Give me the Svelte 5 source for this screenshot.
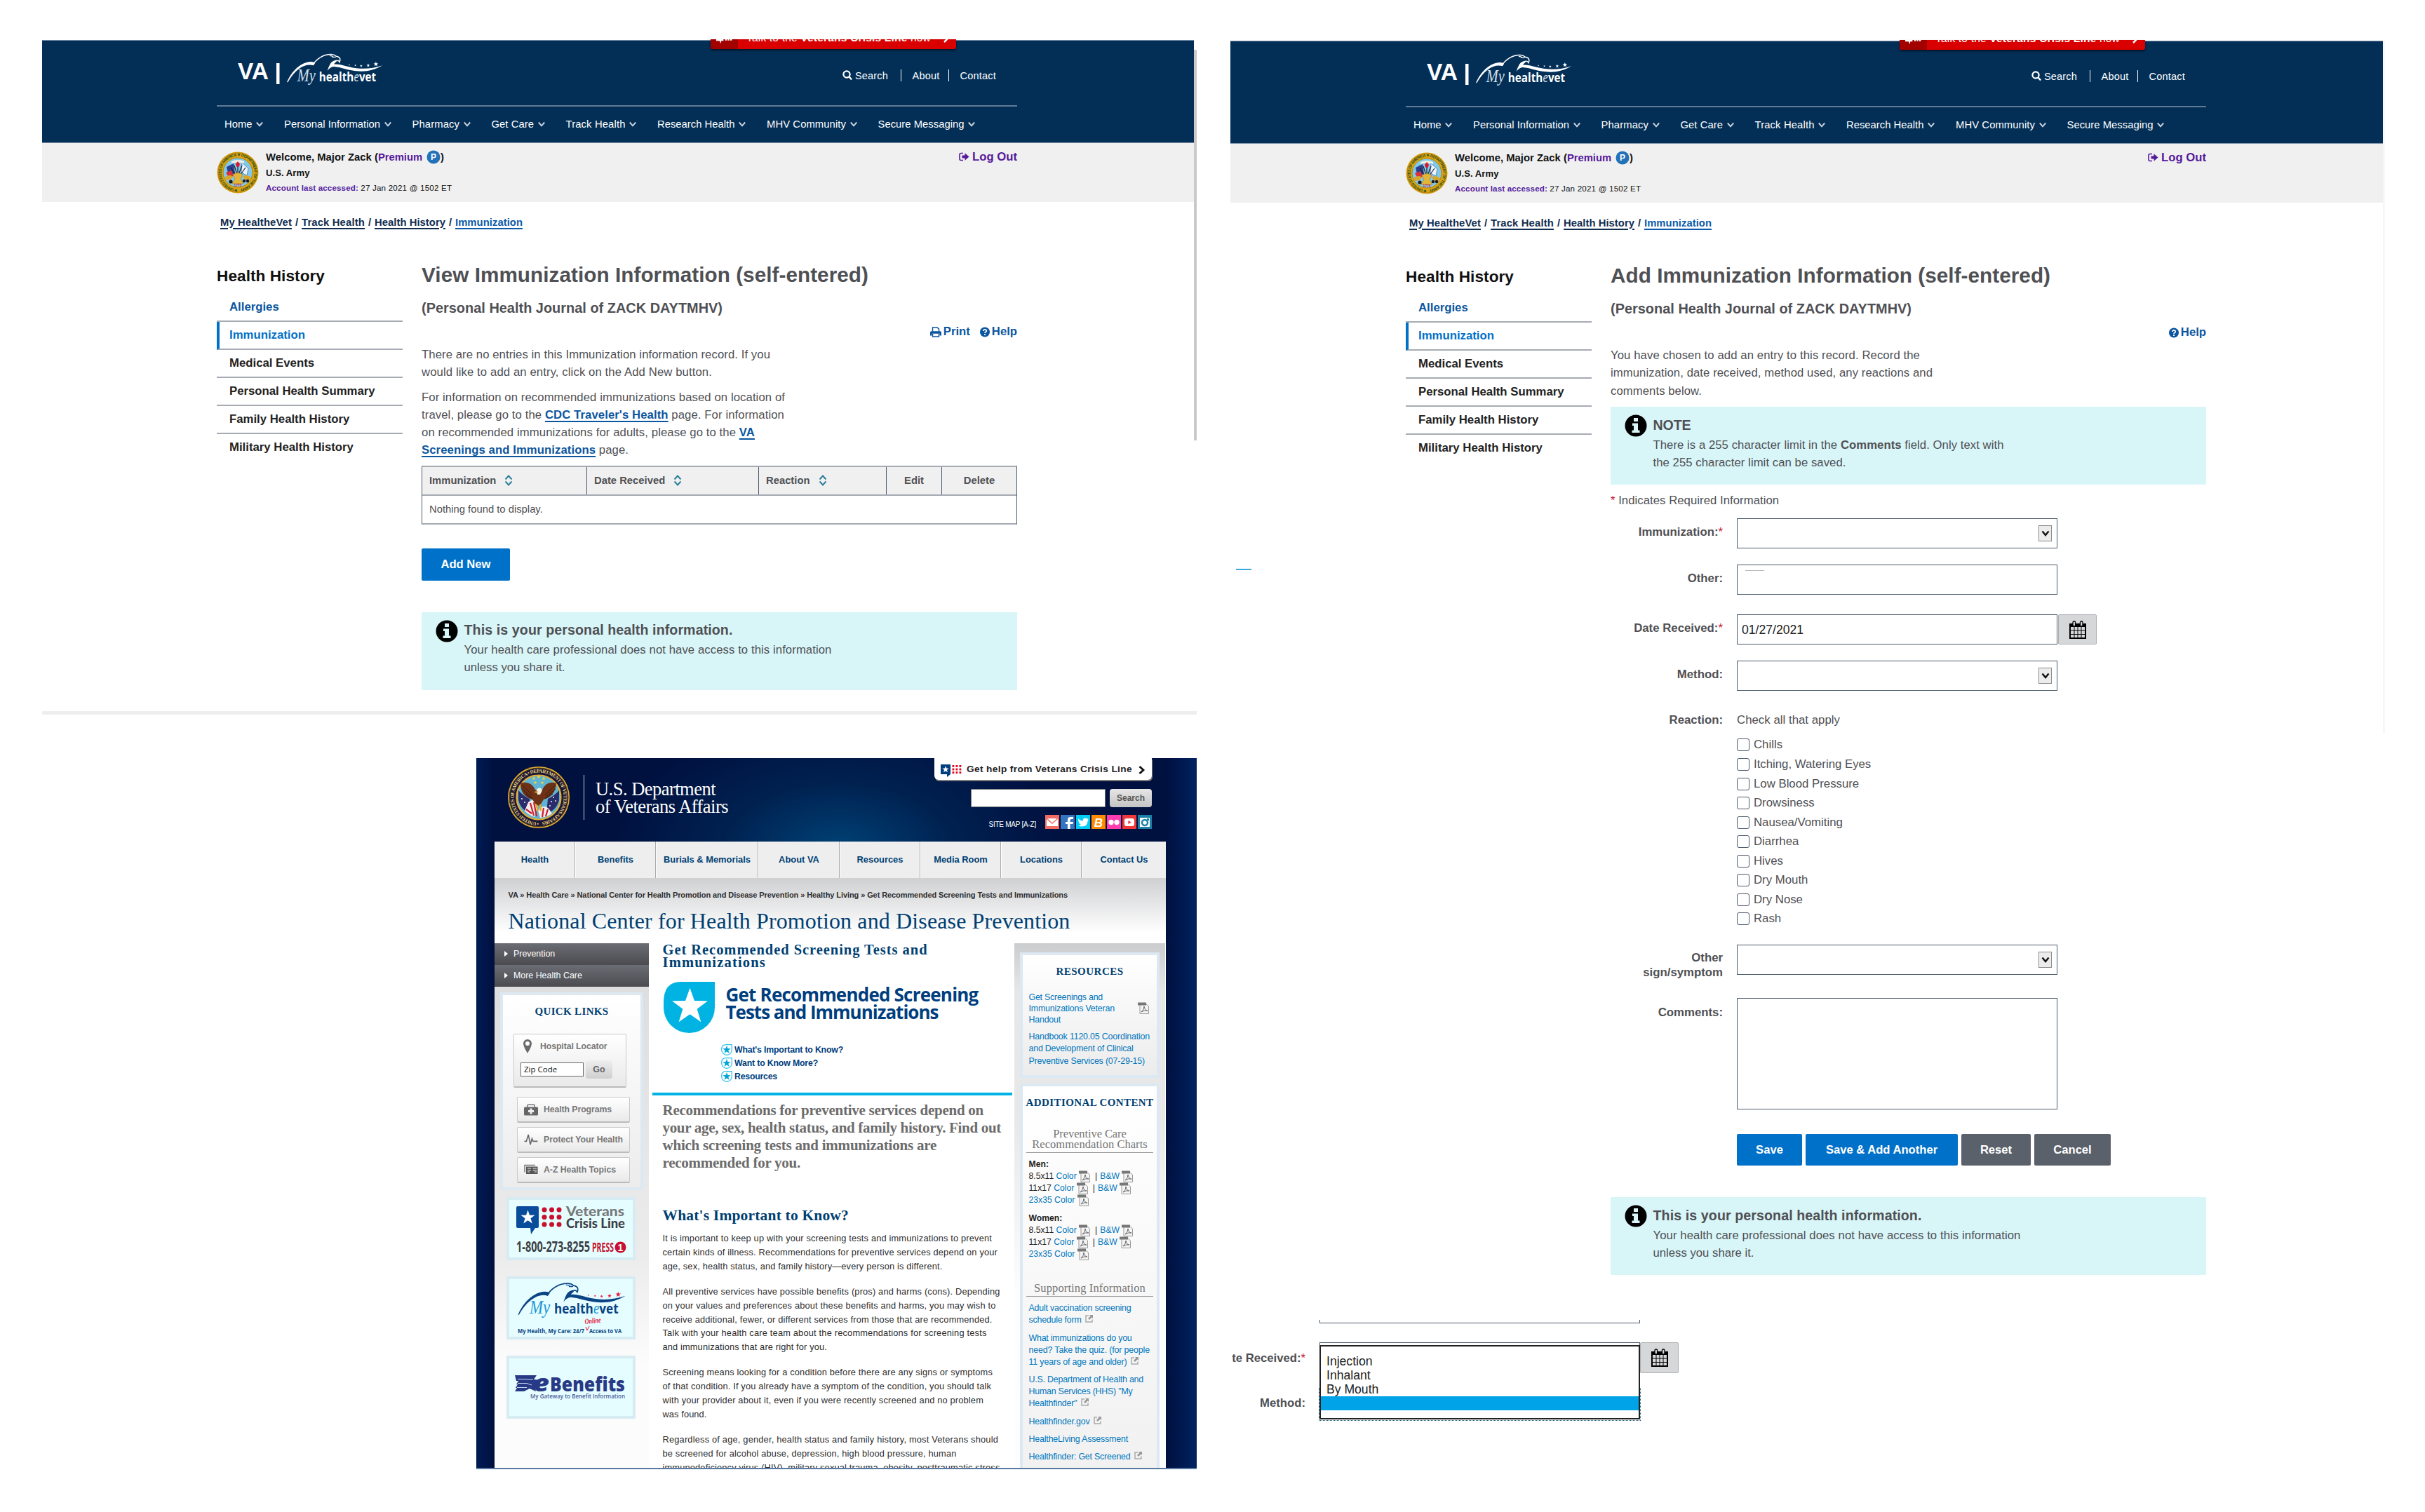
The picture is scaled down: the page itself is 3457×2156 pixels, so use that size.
<script>
  // Spreads letter spacing so that a line fills the measure given in pixels.
  function fit(node, width) {
    const natural = node.getBoundingClientRect().width;
    const count = node.textContent.trim().length;
    if (count > 0) node.style.letterSpacing = `${(width - natural) / count}px`;
  }

  const navItems = [
    ['Home', 39.5],
    ['Personal Information', 137],
    ['Pharmacy', 67.5],
    ['Get Care', 60.5],
    ['Track Health', 85],
    ['Research Health', 110.5],
    ['MHV Community', 113],
    ['Secure Messaging', 123]
  ];
  const sideItems = ['Allergies', 'Immunization', 'Medical Events', 'Personal Health Summary', 'Family Health History', 'Military Health History'];
  const reactions = ['Chills', 'Itching, Watering Eyes', 'Low Blood Pressure', 'Drowsiness', 'Nausea/Vomiting', 'Diarrhea', 'Hives', 'Dry Mouth', 'Dry Nose', 'Rash'];
  const vaNav = ['Health', 'Benefits', 'Burials & Memorials', 'About VA', 'Resources', 'Media Room', 'Locations', 'Contact Us'];
  const body = [
    [
      ['It is important to keep up with your screening tests and immunizations to prevent', 469.5],
      ['certain kinds of illness. Recommendations for preventive services depend on your', 477.5],
      ['age, sex, health status, and family history—every person is different.', 399]
    ],
    [
      ['All preventive services have possible benefits (pros) and harms (cons). Depending', 481],
      ['on your values and preferences about these benefits and harms, you may wish to', 475],
      ['receive additional, fewer, or different services from those that are recommended.', 470],
      ['Talk with your health care team about the recommendations for screening tests', 462],
      ['and immunizations that are right for you.', 234.5]
    ],
    [
      ['Screening means looking for a condition before there are any signs or symptoms', 470.5],
      ['of that condition. If you already have a symptom of the condition, you should talk', 468.5],
      ['with your provider about it, even if you were recently screened and no problem', 457.5],
      ['was found.', 63]
    ],
    [
      ['Regardless of age, gender, health status and family history, most Veterans should', 478.5],
      ['be screened for alcohol abuse, depression, high blood pressure, human', 419],
      ['immunodeficiency virus (HIV), military sexual trauma, obesity, posttraumatic stress', 481]
    ]
  ];
  const support = [
    [['Adult vaccination screening', 146], ['schedule form', 75]],
    [['What immunizations do you', 147], ['need? Take the quiz. (for people', 172.5], ['11 years of age and older)', 140]],
    [['U.S. Department of Health and', 163.5], ['Human Services (HHS) "My', 148], ['Healthfinder"', 69]],
    [['Healthfinder.gov', 87]],
    [['HealtheLiving Assessment', 141.5]],
    [['Healthfinder: Get Screened', 145]]
  ];
  const star = 'M0-10 2.4-3.2 9.5-3.1 3.8 1.2 5.9 8.1 0 4-5.9 8.1-3.8 1.2-9.5-3.1-2.4-3.2Z';
</script>

{#snippet eagle(stroke, accent, stars)}
  <g transform="scale(.2957)">
    <path d="M0 137C22 82 68 38 116 37q14 0 20 7l-8 11C92 43 42 68 5 135Z" fill={stroke} />
    <path d="M124 54C142 22 178 1 214 2q16 1 24 9 14 2 18 12 2 8-2 16-3-8-13-8" fill="none" stroke={stroke} stroke-width="5" />
    <path d="M206 8q12 0 18 7M218 15h18" fill="none" stroke={stroke} stroke-width="4" />
    <path d="M243 29q-24 2-34 18-8 14-14 34 14-18 30-20 26 2 55 11c70 18 126 16 180-17-56 19-110 20-168 5-28-8-46-12-66-11 6-7 15-12 17-20Z" fill={stroke} />
    {#each [[301, 52, 4], [330, 55, 5], [358, 57, 7], [392, 55, 9], [429, 49, 12]] as [x, y, r]}
      <path d={star} fill={stars} transform="translate({x} {y}) scale({r / 10})" />
    {/each}
    <text x="50" y="132" class="script" fill={accent} textLength="88" lengthAdjust="spacingAndGlyphs">My</text>
    <text x="155" y="132" class="mhv" fill={stroke} textLength="275" lengthAdjust="spacingAndGlyphs">health<tspan class="mhv-e" fill={accent}>e</tspan>vet</text>
  </g>
{/snippet}

{#snippet armySeal()}
  <svg class="army" viewBox="0 0 60 60">
    <defs><path id="army-ring" d="M30 53.500A23.500 23.500 0 1 1 30.100 53.500" /></defs>
    <circle cx="30" cy="30" r="29.500" fill="#d9a514" />
    <circle cx="30" cy="30" r="28" fill="none" stroke="#b98208" stroke-width="1" />
    <text class="ring-army"><textPath href="#army-ring" textLength="144">★ UNITED STATES OF AMERICA ★ DEPARTMENT OF THE ARMY</textPath></text>
    <circle cx="30" cy="30" r="21" fill="#7fc9ea" stroke="#b98208" />
    <path d="M14 22l10-5 2 14-9 4Z" fill="#2b3f8c" />
    <path d="M13 30l8-3 3 8-7 2Z" fill="#d8323c" />
    <path d="M36 16l9 8-2 10-8-4Z" fill="#eef3fb" stroke="#4673b5" stroke-width=".8" />
    <path d="M21 14q9-4 18 0v3q-9-3-18 0Z" fill="#f3efe0" />
    <path d="M30 18v20M25 20l5 16 6-16M20 23l9 14M41 23L31 37" stroke="#24222c" stroke-width="1.200" fill="none" />
    <path d="M27 18l3-4 3 4-1.500 4h-3Z" fill="#e0142c" />
    <path d="M23 33q7-5 14 0l-3 6 4 7H22l4-7Z" fill="#e2b53a" stroke="#a67714" stroke-width=".6" />
    <path d="M12 36q8-4 11 0l-3 4-8 1ZM48 36q-8-4-11 0l3 4 8 1Z" fill="#dba52a" />
    <circle cx="20" cy="43" r="2.600" fill="#1d1a1a" /><circle cx="39" cy="42" r="2.200" fill="#1d1a1a" /><circle cx="44" cy="42" r="2.200" fill="#1d1a1a" />
    <text x="30" y="49.500" text-anchor="middle" class="year">1775</text>
  </svg>
{/snippet}

{#snippet vaSeal()}
  <svg class="va-seal" viewBox="0 0 90 90">
    <defs><path id="va-ring" d="M45 80.500A35.500 35.500 0 1 1 45.100 80.500" /></defs>
    <circle cx="45" cy="45" r="44" fill="#dfae36" />
    <circle cx="45" cy="45" r="42" fill="#1c1738" stroke="#5d4212" stroke-width="1" />
    <text class="ring-va"><textPath href="#va-ring" textLength="218">• UNITED STATES OF AMERICA • DEPARTMENT OF VETERANS AFFAIRS</textPath></text>
    <circle cx="45" cy="45" r="31.500" fill="#5fb4d3" stroke="#dfae36" stroke-width="2.200" />
    <path d="M16 35q7 8 16 12l2 21q-14-4-18-19ZM74 35q-7 8-16 12l-2 21q14-4 18-19Z" fill="#2b2c6a" />
    <g fill="#f4f2f4"><circle cx="21" cy="47" r="1" /><circle cx="25" cy="52" r="1" /><circle cx="66" cy="45" r="1" /><circle cx="63" cy="51" r="1" /><circle cx="69" cy="50" r="1" /><circle cx="61" cy="57" r="1" /></g>
    <path d="M30 52q8-7 14 3l-5 18q-9-3-14-9ZM60 62q-8-9-16 2l3 10q10-1 17-6Z" fill="#f3eded" />
    <path d="M33 53l5 18M38 52l4 20M27 62l8 6M52 60l-2 13M58 62l-3 10" stroke="#c92032" stroke-width="2.200" />
    <path d="M19 25q14-5 21 9l5 4 5-4q7-14 20-9-1 18-18 23l-5 8q-4 2-7-2l-4-6Q19 43 19 25Z" fill="#6d3216" />
    <path d="M22 28l14 14M21 33l14 12M25 40l11 7M68 28L54 42M69 33L55 45M65 40l-11 7" stroke="#3d180a" stroke-width="1" />
    <path d="M42 33q6-4 8 2l-3 6h-4Z" fill="#f4efe6" /><path d="M38 37l6-1-2 3Z" fill="#e6a922" />
    <path d="M41 55l3 9M47 55l1 9" stroke="#e6a922" stroke-width="2.500" />
    {#each [[45, 16], [38, 18], [52, 18], [40, 24], [50, 24]] as [x, y]}
      <path d={star} fill="#f2d043" transform="translate({x} {y}) scale(.28)" />
    {/each}
  </svg>
{/snippet}

{#snippet siteTop()}
  <header class="site-head">
    <div class="crisis">
      <span class="crisis-icon"><svg viewBox="0 0 30 10"><path d="M0 0h13v4H9L8 9 6 4H0Z" fill="#fff" /><path d="M16 1h3v2.500h-3zM20.500 1h3v2.500h-3zM25 1h3v2.500h-3z" fill="#fff" /></svg></span>
      <span class="crisis-text"><span use:fit={263}>Talk to the <b>Veterans Crisis Line</b> now</span></span>
      <svg class="crisis-arrow" viewBox="0 0 8 8"><path d="M5 0v2L1 6" stroke="#fff" stroke-width="2.500" fill="none" /></svg>
    </div>
    <div class="brand-row">
      <svg class="brand" viewBox="0 0 210 50">
        <text x="0" y="36" class="va" textLength="44" lengthAdjust="spacingAndGlyphs">VA</text>
        <path d="M55 13h4.500v30H55z" fill="#fff" />
        <g transform="translate(70 0)">{@render eagle('#fff', '#d6e0ea', '#fff')}</g>
      </svg>
      <div class="util">
        <svg class="search-ic" viewBox="0 0 14 15"><circle cx="6" cy="6" r="4.600" fill="none" stroke="#fff" stroke-width="2.200" /><path d="M9.500 9.500l3.600 4" stroke="#fff" stroke-width="2.400" /></svg>
        <span use:fit={47}>Search</span><i class="bar b1"></i><span use:fit={39}>About</span><i class="bar b2"></i><span use:fit={51.500}>Contact</span>
      </div>
    </div>
    <nav class="site-nav">
      {#each navItems as [label, width]}
        <a href="#nav"><span use:fit={width}>{label}</span><svg viewBox="0 0 10 8"><path d="M.8 1.500L5 6.300l4.200-4.800" fill="none" stroke="#c9d3de" stroke-width="1.900" /></svg></a>
      {/each}
    </nav>
  </header>
  <div class="welcome">
    {@render armySeal()}
    <div class="who">
      <p class="w1"><span use:fit={160}>Welcome, Major Zack (</span><span class="purple" use:fit={63}>Premium</span><svg viewBox="0 0 20 20"><circle cx="10" cy="10" r="9.500" fill="#2272b9" /><text x="10" y="14.300" text-anchor="middle" class="p">P</text></svg><span>)</span></p>
      <p class="w2"><span use:fit={62.500}>U.S. Army</span></p>
      <p class="w3"><b class="purple" use:fit={132}>Account last accessed:</b> <span use:fit={130}>27 Jan 2021 @ 1502 ET</span></p>
    </div>
    <a class="logout" href="#out"><svg viewBox="0 0 15 14"><path d="M6 1.500H3Q1 1.500 1 3.500v6q0 2 2 2h3" fill="none" stroke="#551a9b" stroke-width="1.600" /><path d="M4.500 4.500h4V1.200L14.500 6.500 8.500 11.800V8.500h-4Z" fill="#551a9b" /></svg><span use:fit={64}>Log Out</span></a>
  </div>
  <div class="crumbs"><a href="#1" use:fit={102}>My HealtheVet</a><i>/</i><a href="#2" use:fit={90}>Track Health</a><i>/</i><a href="#3" use:fit={101}>Health History</a><i>/</i><a class="cur" href="#4" use:fit={96}>Immunization</a></div>
{/snippet}

{#snippet sideMenu()}
  <aside class="side">
    <h3><span use:fit={154}>Health History</span></h3>
    <ul>
      {#each sideItems as item, i}
        <li class:blue={i === 0} class:active={i === 1}>{item}</li>
      {/each}
    </ul>
  </aside>
{/snippet}

{#snippet helpLink()}
  <a class="tool" href="#help"><svg viewBox="0 0 14 15"><circle cx="7" cy="7.500" r="7" fill="#0b569f" /><path d="M4.800 6Q5 3.800 7 3.800T9.300 5.700Q9.300 6.800 8 7.500 7 8.100 7 9" fill="none" stroke="#fff" stroke-width="1.700" /><path d="M6 10.200h2v1.900H6z" fill="#fff" /></svg><span>Help</span></a>
{/snippet}

{#snippet infoIcon()}
  <svg class="info-ic" viewBox="0 0 32 32"><circle cx="16" cy="16" r="15.500" fill="#000" /><path d="M13 5h6v5h-6zM11 12.500h8v10h2.500V26h-11v-3.500H13V16h-2Z" fill="#d8f5f8" /></svg>
{/snippet}

{#snippet infoBox()}
  <div class="info">
    {@render infoIcon()}
    <div>
      <h4><span use:fit={383}>This is your personal health information.</span></h4>
      <p><span use:fit={524}>Your health care professional does not have access to this information</span><br /><span use:fit={144}>unless you share it.</span></p>
    </div>
  </div>
{/snippet}

{#snippet sortIcon()}
  <svg class="sort" viewBox="0 0 12 16"><path d="M1.500 6.500L6 1.500l4.500 5M1.500 9.500l4.500 5 4.500-5" fill="none" stroke="#2a7f97" stroke-width="1.900" /></svg>
{/snippet}

{#snippet selectBox()}
  <div class="field"><span class="drop"><svg viewBox="0 0 12 9"><path d="M1.500 1.500L6 7l4.500-5.500" fill="none" stroke="#111" stroke-width="2.400" /></svg></span></div>
{/snippet}

{#snippet calendar()}
  <span class="cal"><svg viewBox="0 0 24 26"><path d="M1 5h22v20H1z" fill="#d6d7d9" stroke="#000" stroke-width="2" /><path d="M1 4h22v5H1z" fill="#000" /><path d="M7 9v16M12 9v16M17 9v16M1 14h22M1 19.500h22" stroke="#000" stroke-width="1" /><rect x="5" y="1" width="3.600" height="7" rx="1.500" fill="#d6d7d9" stroke="#000" stroke-width="1.300" /><rect x="15.400" y="1" width="3.600" height="7" rx="1.500" fill="#d6d7d9" stroke="#000" stroke-width="1.300" /></svg></span>
{/snippet}

{#snippet pdf()}
  <svg class="pdf" viewBox="0 0 16 17"><path d="M3 3h9l3.500 3v10.500H3Z" fill="#f4f4f4" stroke="#999" stroke-width="1" /><path d="M0 .5h12v4H0z" fill="#777" /><path d="M5 14q4-3 4-8 1 6 5 6-5-1-9 2" fill="none" stroke="#666" stroke-width="1" /></svg>
{/snippet}

{#snippet ext()}
  <svg class="ext" viewBox="0 0 11 11"><path d="M5 1H1v9h9V6.500" fill="none" stroke="#aaa" stroke-width="1.500" /><path d="M6 0h5v5L9.400 3.500 6 7 4 5l3.500-3.400Z" fill="#999" /></svg>
{/snippet}

{#snippet chartLinks(title)}
  <p class="chart">
    <b>{title}</b><br />8.5x11 <a href="#c">Color</a> {@render pdf()}<i class="sep">|</i><a href="#b">B&amp;W</a> {@render pdf()}<br />11x17 <a href="#c">Color</a> {@render pdf()}<i class="sep">|</i><a href="#b">B&amp;W</a> {@render pdf()}<br /><a href="#d">23x35 Color</a> {@render pdf()}
  </p>
{/snippet}

<main class="canvas">
  <section class="window view">
    {@render siteTop()}
    <i class="scroll"></i>
    <div class="columns">
      {@render sideMenu()}
      <div class="content">
        <h1><span use:fit={637}>View Immunization Information (self-entered)</span></h1>
        <h2><span use:fit={429}>(Personal Health Journal of ZACK DAYTMHV)</span></h2>
        <div class="tools">
          <a class="tool" href="#print"><svg class="print" viewBox="0 0 16 15"><path d="M0 12.500V8q0-1.700 1.700-1.700h12.600Q16 6.300 16 8v4.500h-2.500V9.800h-11v2.700Z" fill="#0b569f" /><path d="M3.500 6.500V1H10l2.500 2.200v3.300M3.500 10v4h9v-4" fill="none" stroke="#0b569f" stroke-width="1.500" /></svg><span>Print</span></a>
          {@render helpLink()}
        </div>
        <p class="para"><span use:fit={497}>There are no entries in this Immunization information record. If you</span><br /><span use:fit={414}>would like to add an entry, click on the Add New button.</span></p>
        <p class="para"><span use:fit={518}>For information on recommended immunizations based on location of</span><br /><span use:fit={517}>travel, please go to the <a href="#cdc">CDC Traveler's Health</a> page. For information</span><br /><span use:fit={475}>on recommended immunizations for adults, please go to the <a href="#va">VA</a></span><br /><span use:fit={295}><a href="#va">Screenings and Immunizations</a> page.</span></p>
        <div class="table">
          <div class="tr head">
            <span>Immunization {@render sortIcon()}</span><span>Date Received {@render sortIcon()}</span><span>Reaction {@render sortIcon()}</span><span class="mid">Edit</span><span class="mid">Delete</span>
          </div>
          <div class="empty">Nothing found to display.</div>
        </div>
        <button class="btn add">Add New</button>
        {@render infoBox()}
      </div>
    </div>
    <i class="strip"></i>
  </section>

  <section class="window form-win">
    {@render siteTop()}
    <i class="edge"></i>
    <div class="columns">
      {@render sideMenu()}
      <div class="content">
        <h1><span use:fit={627}>Add Immunization Information (self-entered)</span></h1>
        <h2><span use:fit={429}>(Personal Health Journal of ZACK DAYTMHV)</span></h2>
        <div class="tools">{@render helpLink()}</div>
        <p class="para"><span use:fit={441}>You have chosen to add an entry to this record. Record the</span><br /><span use:fit={459}>immunization, date received, method used, any reactions and</span><br /><span use:fit={130}>comments below.</span></p>
        <div class="info note">
          {@render infoIcon()}
          <div>
            <h4><span use:fit={54}>NOTE</span></h4>
            <p><span use:fit={500}>There is a 255 character limit in the <b>Comments</b> field. Only text with</span><br /><span use:fit={275}>the 255 character limit can be saved.</span></p>
          </div>
        </div>
        <p class="req"><em>*</em> <span use:fit={229}>Indicates Required Information</span></p>
        <div class="row r1"><label>Immunization:<em>*</em></label>{@render selectBox()}</div>
        <div class="row r2"><label>Other:</label><div class="field other"><i class="nick"></i></div></div>
        <div class="row r3"><label>Date Received:<em>*</em></label><div class="field date">01/27/2021</div>{@render calendar()}</div>
        <div class="row r2"><label>Method:</label>{@render selectBox()}</div>
        <div class="row r5"><label>Reaction:</label><span use:fit={147}>Check all that apply</span></div>
        <div class="checks">
          {#each reactions as r}
            <div class="check"><i></i>{r}</div>
          {/each}
        </div>
        <div class="row r6"><label>Other<br />sign/symptom</label>{@render selectBox()}</div>
        <div class="row r7"><label>Comments:</label><div class="field area"></div></div>
        <div class="actions"><button class="btn save">Save</button><button class="btn another">Save &amp; Add Another</button><button class="btn grey reset">Reset</button><button class="btn grey cancel">Cancel</button></div>
        {@render infoBox()}
      </div>
    </div>
  </section>
  <i class="dash"></i>

  <section class="fragment">
    <div class="stub"></div>
    <div class="frag-row"><label>te Received:<em>*</em></label><div class="under"></div>{@render calendar()}</div>
    <div class="frag-method"><label>Method:</label></div>
    <div class="focus"></div>
    <ul class="menu"><li>Injection</li><li>Inhalant</li><li>By Mouth</li><li class="sel"></li></ul>
  </section>

  <section class="window va-win">
    <header class="va-head">
      <div class="va-brand">
        {@render vaSeal()}
        <p><span use:fit={171}>U.S. Department</span><br /><span use:fit={189}>of Veterans Affairs</span></p>
      </div>
      <div class="va-tools">
        <div class="tab">
          <svg viewBox="0 0 30 18"><path d="M0 0h14v14l-5 4V14H0Z" fill="#003e7e" /><path d={star} fill="#fff" transform="translate(7 7.200) scale(.5)" />{#each [0, 1, 2] as r}{#each [0, 1, 2] as c}<rect x={16.500 + c * 5} y={1 + r * 4.600} width="2.800" height="2.800" fill="#e2001a" />{/each}{/each}</svg>
          <span use:fit={236}>Get help from Veterans Crisis Line</span>
          <svg class="chev" viewBox="0 0 9 12"><path d="M1.500 1L7 6 1.500 11" fill="none" stroke="#111" stroke-width="2.800" /></svg>
        </div>
        <div class="searchline"><i></i><button>Search</button></div>
        <div class="social">
          <span use:fit={67.500}>SITE MAP [A-Z]</span>
          <svg viewBox="0 0 20 20"><path d="M0 0h20v20H0z" fill="#f36c64" /><path d="M2 5h16v11H2z" fill="#fff" /><path d="M2 5l8 7 8-7" fill="none" stroke="#f36c64" stroke-width="1.500" /></svg>
          <svg viewBox="0 0 20 20"><path d="M0 0h20v20H0z" fill="#3774bf" /><path d="M10 20v-7H7v-3h3V7q0-4 4-4h4v3h-3q-1.500 0-1.500 1.500V10H18l-.5 3h-4v7Z" fill="#fff" /></svg>
          <svg viewBox="0 0 20 20"><path d="M0 0h20v20H0z" fill="#00ccf5" /><path d="M3 5q3 3.500 7 3.500-.5-4 3-4 1.500 0 2.500 1l2-.5-1 2 1.500-.2L16.500 9q0 7.500-8 7.500-3 0-5.500-1.500 3 0 4-1.300-2.500-.7-3-2.400h1.500Q3 10 3 7.500l1.500.5Q2.500 7 3 5Z" fill="#fff" /></svg>
          <svg viewBox="0 0 20 20"><path d="M0 0h20v20H0z" fill="#ff8c00" /><text x="10" y="16.500" text-anchor="middle" class="blog">B</text></svg>
          <svg viewBox="0 0 20 20"><path d="M0 0h20v20H0z" fill="#ff3db1" /><circle cx="6" cy="10.500" r="3.700" fill="#fff" /><circle cx="14" cy="10.500" r="3.700" fill="#fff" /></svg>
          <svg viewBox="0 0 20 20"><path d="M0 0h20v20H0z" fill="#f0383a" /><rect x="3" y="5" width="14" height="11" rx="3" fill="#fff" /><path d="M8.300 8v5l4.500-2.500Z" fill="#f0383a" /></svg>
          <svg viewBox="0 0 20 20"><path d="M0 0h20v20H0z" fill="#1c7fa8" /><path d="M3 4h14v13H3z" fill="#fff" /><circle cx="10" cy="11" r="4" fill="#fff" stroke="#1c7fa8" stroke-width="2.500" /><path d="M13 5h3v3h-3z" fill="#1c7fa8" /></svg>
        </div>
      </div>
    </header>
    <div class="page">
      <nav class="va-nav">{#each vaNav as n}<a href="#n">{n}</a>{/each}</nav>
      <div class="trail"><span use:fit={797.500}>VA » Health Care » National Center for Health Promotion and Disease Prevention » Healthy Living » Get Recommended Screening Tests and Immunizations</span></div>
      <h1 class="va-title"><span use:fit={801}>National Center for Health Promotion and Disease Prevention</span></h1>
      <div class="va-cols">
        <aside class="left">
          <div class="dark"><i></i>Prevention</div>
          <div class="dark"><i></i>More Health Care</div>
          <div class="quick">
            <h4><span use:fit={105}>QUICK LINKS</span></h4>
            <div class="card locator">
              <p><svg viewBox="0 0 12 20"><path d="M6 0a6 6 0 0 1 6 6Q12 10 6 20 0 10 0 6A6 6 0 0 1 6 0Z" fill="#6b6b6b" /><circle cx="6" cy="6" r="3" fill="#fff" /></svg><span use:fit={95.500}>Hospital Locator</span></p>
              <div><span class="zip">Zip Code</span><button>Go</button></div>
            </div>
            <div class="card"><svg viewBox="0 0 20 16"><path d="M5 4V1.500Q5 .8 6 .8h8q1 0 1 .7V4" fill="none" stroke="#777" stroke-width="1.600" /><rect y="4" width="20" height="12" rx="1.500" fill="#666" /><path d="M8.500 6h3v2.500H14v3h-2.500V14h-3v-2.500H6v-3h2.500Z" fill="#eee" /></svg><span use:fit={97}>Health Programs</span></div>
            <div class="card"><svg viewBox="0 0 20 18"><path d="M0 12h3l3-10 3 15 2.500-9 1.500 4h7" fill="none" stroke="#666" stroke-width="1.700" /></svg><span use:fit={113}>Protect Your Health</span></div>
            <div class="card"><svg viewBox="0 0 20 14"><path d="M1 11V1h15" fill="none" stroke="#777" stroke-width="1.500" /><path d="M3 3h16.500v10.500H3z" fill="#555" /><path d="M5 5.500h5M5 8h5M5 10.500h3M12.500 5.500H18M12.500 8H18M15 10.500h3" stroke="#eee" stroke-width="1.200" /></svg><span use:fit={103}>A-Z Health Topics</span></div>
          </div>
          <svg class="banner" viewBox="0 0 184 90">
            <rect x="2" y="2" width="180" height="86" fill="#e6fdff" stroke="#d6ebf2" stroke-width="4" />
            <path d="M16 13h28q2 0 2 2v27q0 2-2 2h-3l-6 9-1-9H16q-2 0-2-2V15q0-2 2-2Z" fill="#0a4c9c" />
            <path d={star} fill="#fff" transform="translate(30.500 29) scale(1.050)" />
            {#each [0, 1, 2] as r}{#each [0, 1, 2] as c}<circle cx={54 + c * 10.500} cy={18 + r * 10.500} r="3.500" fill="#c8102e" />{/each}{/each}
            <text x="85" y="26.500" class="vcl" fill="#76797c" textLength="83" lengthAdjust="spacingAndGlyphs">Veterans</text>
            <text x="85" y="44" class="vcl" fill="#3c4146" textLength="84" lengthAdjust="spacingAndGlyphs">Crisis Line</text>
            <text x="14" y="78" class="phone" fill="#3c4146" textLength="105" lengthAdjust="spacingAndGlyphs">1-800-273-8255</text>
            <text x="122" y="78" class="press" fill="#c8102e" textLength="31" lengthAdjust="spacingAndGlyphs">PRESS</text>
            <circle cx="162.500" cy="71.500" r="8" fill="#c8102e" /><text x="162.500" y="77" text-anchor="middle" class="one">1</text>
          </svg>
          <svg class="banner" viewBox="0 0 184 90">
            <rect x="2" y="2" width="180" height="86" fill="#e6fdff" stroke="#d6ebf2" stroke-width="4" />
            <g transform="translate(16.300 9.500) scale(1.127)">{@render eagle('#0a4484', '#1b97d4', '#e4173e')}</g>
            <text x="112" y="68" class="online" textLength="23" lengthAdjust="spacingAndGlyphs" transform="rotate(-6 112 68)">Online</text>
            <path d="M113 72l2 5 3-6" fill="none" stroke="#e4173e" />
            <text x="16" y="80.500" class="tag" textLength="95" lengthAdjust="spacingAndGlyphs">My Health, My Care: 24/7</text>
            <text x="118" y="80.500" class="tag" textLength="46" lengthAdjust="spacingAndGlyphs">Access to VA</text>
          </svg>
          <svg class="banner" viewBox="0 0 184 90">
            <rect x="2" y="2" width="180" height="86" fill="#e6fdff" stroke="#d6ebf2" stroke-width="4" />
            <path d="M12 28h31l-4 6 10 1-9 7 2 9-9-4-8 4H12l3-5h-2l3-5h-2l3-5h-3Z" fill="#283a85" />
            <path d="M16 33.500h13M16 39.500h14M15 45.500h14" stroke="#c6d3ec" stroke-width="1.200" fill="none" />
            <path d="M29 34l9 .5M30 40l6 2" stroke="#c6d3ec" stroke-width="1" />
            <text x="38" y="50.500" class="eb-e" textLength="23" lengthAdjust="spacingAndGlyphs">e</text>
            <text x="62" y="50.500" class="eb" textLength="107" lengthAdjust="spacingAndGlyphs">Benefits</text>
            <text x="34" y="60.500" class="eb-sub" textLength="135" lengthAdjust="spacingAndGlyphs">My Gateway to Benefit Information</text>
          </svg>
        </aside>
        <article>
          <h2 class="art-title"><span use:fit={378}>Get Recommended Screening Tests and</span><br /><span use:fit={147.500}>Immunizations</span></h2>
          <div class="hero">
            <svg viewBox="0 0 73 73"><path d="M24 0H73V36.500A36.500 36.500 0 0 1 0 36.500V30Q0 0 24 0Z" fill="#00b3e3" /><path d={star} fill="#fff" transform="translate(37.500 35.500) scale(2.680)" /></svg>
            <p><span use:fit={360}>Get Recommended Screening</span><br /><span use:fit={303}>Tests and Immunizations</span></p>
          </div>
          <ul class="jump">
            {#each [["What's Important to Know?", 155], ['Want to Know More?', 119], ['Resources', 61]] as [t, w]}
              <li><svg viewBox="0 0 16 16"><path d="M7 .7h8.300V8A7.300 7.300 0 0 1 .7 8V7Q.7.7 7 .7Z" fill="#fff" stroke="#2bc0e8" stroke-width="1.200" /><path d={star} fill="#00a4d8" transform="translate(8 8) scale(.6)" /></svg><span use:fit={w}>{t}</span></li>
            {/each}
          </ul>
          <i class="rule"></i>
          <p class="lead">
            <span use:fit={457.500}>Recommendations for preventive services depend on</span><br /><span use:fit={482.500}>your age, sex, health status, and family history. Find out</span><br /><span use:fit={390.500}>which screening tests and immunizations are</span><br /><span use:fit={196.500}>recommended for you.</span>
          </p>
          <h3 class="know"><span use:fit={265.500}>What's Important to Know?</span></h3>
          {#each body as para}
            <p class="copy">{#each para as [line, w]}<span use:fit={w}>{line}</span><br />{/each}</p>
          {/each}
        </article>
        <aside class="right">
          <div class="box res">
            <h4><span use:fit={96}>RESOURCES</span></h4>
            <div class="handout"><a href="#h"><span use:fit={105.500}>Get Screenings and</span><br /><span use:fit={122.500}>Immunizations Veteran</span><br /><span use:fit={45.500}>Handout</span></a>{@render pdf()}</div>
            <a class="book" href="#k"><span use:fit={172.500}>Handbook 1120.05 Coordination</span><br /><span use:fit={149}>and Development of Clinical</span><br /><span use:fit={165.500}>Preventive Services (07-29-15)</span></a>
          </div>
          <div class="box addl">
            <h4><span use:fit={182}>ADDITIONAL CONTENT</span></h4>
            <h5 class="h-a"><span use:fit={104.500}>Preventive Care</span><br /><span use:fit={164.500}>Recommendation Charts</span></h5>
            {@render chartLinks('Men:')}
            {@render chartLinks('Women:')}
            <h5 class="h-b"><span use:fit={159}>Supporting Information</span></h5>
            {#each support as lines, i}
              <p class="link">{#each lines as [l, w], j}{#if j}<br />{/if}<span use:fit={w}>{l}</span>{/each}{#if i !== 4}{@render ext()}{/if}</p>
            {/each}
          </div>
        </aside>
      </div>
    </div>
  </section>
</main>

<style>
  :global(body) { background: #fff; }
  .canvas { position: relative; width: 3457px; height: 2156px; overflow: hidden; background: #fff; font-family: 'Liberation Sans', Arial, sans-serif; color: #4f5054; }
  .canvas :is(h1, h2, h3, h4, h5, p, ul) { margin: 0; padding: 0; font-weight: inherit; }
  .canvas ul { list-style: none; }
  .canvas svg { display: block; flex: none; overflow: visible; }
  .canvas span { white-space: nowrap; }
  .canvas i { font-style: normal; }
  .canvas a { text-decoration: none; color: inherit; }
  .canvas em { font-style: normal; color: #c8102e; }
  .canvas button { font-family: inherit; border: 0; padding: 0; }
  .w1 span, .crumbs a { display: inline-block; }
  .window { position: absolute; box-sizing: border-box; }
  .view { left: 60px; top: 57px; width: 1646px; height: 962px; }
  .form-win { left: 1755px; top: 58px; width: 1646px; height: 1770px; }

  .site-head { position: relative; width: 1642px; height: 147px; box-sizing: border-box; padding: 0 252px 0 249px; background: #032f57; border-top: 1px solid #7890a8; border-bottom: 1px solid #7890a8; }
  .crisis { position: absolute; left: 953px; top: -2px; width: 350px; height: 14px; display: flex; overflow: hidden; background: #d80000; border-radius: 0 0 3px 3px; box-shadow: 0 2px 3px #0008; color: #fff; font-size: 15.500px; }
  .crisis-icon { width: 39px; background: #a30000; }
  .crisis-icon svg { width: 28px; height: 8px; margin: -1px 0 0 6px; }
  .crisis-text { margin: -12.500px 0 0 12px; line-height: 20px; }
  .crisis-arrow { width: 8px; height: 8px; margin: -2px 0 0 18px; }
  .brand-row { height: 92px; display: flex; justify-content: space-between; }
  .brand { width: 210px; height: 50px; margin: 19px 0 0 30px; }
  .va { font: bold 33px 'Liberation Sans', sans-serif; fill: #fff; }
  .script { font: italic 82px 'Liberation Serif', serif; }
  .mhv { font: bold 60px 'Open Sans', sans-serif; }
  .mhv-e { font-style: italic; font-weight: 400; }
  .util { display: flex; align-items: center; height: 18px; margin: 40.500px 30px 0 0; color: #fff; font-size: 14.500px; }
  .search-ic { width: 14px; height: 15px; margin-right: 4.500px; }
  .bar { width: 1px; height: 17px; background: #fff; }
  .b1 { margin: 0 16px 0 17.500px; }
  .b2 { margin: 0 16px 0 12px; }
  .site-nav { display: flex; align-items: center; gap: 30px; height: 52px; border-top: 2px solid #607a94; padding-left: 11px; color: #fff; font-size: 14.800px; box-sizing: border-box; }
  .site-nav a { display: flex; align-items: center; gap: 5.500px; }
  .site-nav svg { width: 10px; height: 8px; }

  .welcome { display: flex; width: 1642px; height: 84px; box-sizing: border-box; padding: 0 252px 0 249px; background: #f0f0f0; }
  .army { width: 60px; height: 60px; margin: 12px 10px 0 0; }
  .ring-army { font: bold 5.500px 'Liberation Sans', sans-serif; fill: #2f4a1c; }
  .year { font: bold 5px 'Liberation Sans', sans-serif; fill: #d21f35; }
  .who { color: #111; flex: 1; }
  .w1 { margin-top: 9px !important; height: 22px; line-height: 22px; font-size: 14.800px; font-weight: bold !important; display: flex; align-items: center; }
  .w1 svg { width: 20px; height: 20px; margin: 0 0 0 6px; }
  .p { font: bold 12px 'Liberation Sans', sans-serif; fill: #fff; }
  .w2 { margin-top: 1px !important; height: 21px; line-height: 22px; font-size: 13.100px; font-weight: bold !important; }
  .w3 { height: 20px; line-height: 20px; font-size: 11.600px; margin-top: .5px !important; }
  .purple { color: #551a9b; }
  .logout { display: flex; align-items: center; height: 20px; margin-top: 9.500px; gap: 4.500px; color: #551a9b !important; font-size: 16.700px; font-weight: bold; }
  .logout svg { width: 15px; height: 14px; }
  .crumbs { display: flex; margin: 18.500px 0 0 254px; height: 20px; line-height: 20px; font-size: 14.800px; font-weight: bold; color: #112e51; }
  .crumbs a { text-decoration: underline; text-decoration-thickness: 1.500px; text-underline-offset: 2.500px; }
  .crumbs i { width: 14px; text-align: center; }
  .crumbs .cur { color: #0b5baa; }
  .columns { display: grid; grid-template-columns: 265px 849px; column-gap: 27px; margin: 43.500px 0 0 249px; }

  .side { padding-top: 9px; }
  .side h3 { height: 30px; line-height: 30px; font-size: 22.600px; font-weight: bold; color: #111; margin-bottom: 10px; }
  .side li { height: 38px; line-height: 38px; border-bottom: 2px solid #a6abb3; padding-left: 18px; font-size: 16.750px; font-weight: bold; color: #222; }
  .side li:last-child { border-bottom: 0; }
  .side .blue { color: #0b569f; }
  .side .active { border-left: 4px solid #0071c9; padding-left: 14px; color: #0071c9; }

  .content { padding-top: 3.700px; }
  .content h1 { height: 36px; line-height: 36px; font-size: 29.700px; font-weight: bold; }
  .content h2 { height: 26px; line-height: 26px; margin-top: 16px; font-size: 19.900px; font-weight: bold; }
  .tools { display: flex; justify-content: flex-end; gap: 14px; height: 24px; line-height: 24px; margin-top: 9.500px; color: #0b569f; font-size: 16.700px; font-weight: bold; }
  .tool { display: flex; align-items: center; gap: 3px; }
  .tool svg { width: 14px; height: 15px; }
  .tool .print { width: 16px; }
  .para { line-height: 25.200px; font-size: 16.700px; margin-top: 8px !important; }
  .para + .para { margin-top: 10.200px !important; }
  .para a { color: #0b569f; font-weight: bold; text-decoration: underline; text-decoration-thickness: 1.500px; text-underline-offset: 3px; }
  .table { margin-top: 9px; height: 84px; box-sizing: border-box; border: 1px solid #4c5a6b; border-top: 2px solid #a6abb3; border-bottom: 2px solid #a6abb3; font-size: 14.800px; }
  .tr { display: grid; grid-template-columns: 235px 245px 182px 79px 1fr; background: #f0f0f0; border-bottom: 2px solid #a6abb3; box-sizing: border-box; height: 41px; font-weight: bold; }
  .tr > span { display: flex; align-items: center; gap: 12px; padding-left: 10px; border-right: 1px solid #4c5a6b; }
  .tr > span:last-child { border-right: 0; }
  .tr .mid { justify-content: center; padding: 0; }
  .sort { width: 12px; height: 16px; }
  .empty { line-height: 39px; padding-left: 10px; }
  .btn { display: block; background: #0071c9; color: #fff; font-size: 16.600px; font-weight: bold; border-radius: 2px; height: 45px; }
  .add { width: 126px; height: 46px; margin: 34px 0 45px; }
  .info { display: flex; gap: 8.500px; height: 111px; background: #d8f5f8; }
  .info-ic { width: 32px; height: 32px; margin: 11px 0 0 20px; }
  .info h4 { height: 24px; line-height: 24px; margin-top: 13.500px; font-size: 19.600px; font-weight: bold; }
  .info p { line-height: 25px; font-size: 16.700px; margin-top: 4px; }
  .strip { position: absolute; left: 0; bottom: 0; width: 1646px; height: 5px; background: #eee; }
  .scroll { position: absolute; right: 0; top: 14px; width: 4px; height: 557px; background: #c9c9c9; }
  .edge { position: absolute; left: 1643px; top: 0; width: 1px; height: 988px; background: #e3e3e3; }

  .form-win .site-head, .form-win .welcome { width: 1643px; margin-left: -1px; padding-left: 250px; padding-right: 252px; }
  .form-win .crisis { left: 954px; }
  .form-win .para { margin-top: 8px !important; }
  .note { margin-top: 10.500px; }
  .req { height: 24px; line-height: 24px; margin-top: 10.600px !important; font-size: 16.700px; }
  .row { display: flex; font-size: 16.800px; line-height: 24px; }
  .row label { width: 160px; margin-right: 20px; padding-top: 8.200px; text-align: right; font-weight: bold; }
  .row em { font-weight: normal; }
  .field { display: flex; align-items: center; width: 457px; height: 43.500px; box-sizing: border-box; border: 1px solid #4c5a6b; background: #fff; }
  .r1 { margin-top: 13px; }
  .r2 { margin-top: 22.500px; }
  .r3 { margin-top: 27.500px; }
  .r5 { margin-top: 29.700px; }
  .r5 label { padding-top: 0; }
  .r6 { margin-top: 22.700px; height: 43.500px; }
  .r6 label { line-height: 20.500px; padding-top: 9.500px; }
  .r7 { margin-top: 33px; }
  .drop { margin: 0 7px 0 auto; display: flex; align-items: center; justify-content: center; width: 19px; height: 23px; box-sizing: border-box; border: 1px solid #8b8b8b; background: #ececec; }
  .drop svg { width: 12px; height: 9px; }
  .nick { align-self: flex-start; margin: 7px 0 0 11px; width: 27px; height: 1px; background: #bbb; }
  .date { padding-left: 6px; color: #222; font-size: 17.600px; }
  .cal { display: flex; align-items: center; justify-content: center; width: 55px; height: 43.500px; box-sizing: border-box; margin-left: 1px; border: 1px solid #adafb2; border-radius: 2px; background: #d6d7d9; }
  .cal svg { width: 24px; height: 26px; }
  .checks { margin: 9.600px 0 0 180px; font-size: 16.800px; }
  .check { display: flex; align-items: center; gap: 6px; height: 27.550px; line-height: 24px; }
  .check i { width: 18px; height: 18px; box-sizing: border-box; border: 1px solid #4c5a6b; border-radius: 3px; }
  .area { height: 159px; }
  .actions { display: flex; gap: 5px; margin: 35px 0 45px 180px; }
  .grey { background: #5b616b; }
  .save { width: 93px; }
  .another { width: 217px; }
  .reset { width: 99px; }
  .cancel { width: 109px; }
  .dash { position: absolute; left: 1762px; top: 811px; width: 22px; height: 2px; background: #3aa7dd; }

  .fragment { position: absolute; left: 1754px; top: 1882px; width: 700px; height: 160px; font-size: 16.700px; line-height: 24px; font-weight: bold; }
  .stub { box-sizing: border-box; width: 457px; height: 5px; margin-left: 127px; border: 1px solid #4c5a6b; border-top: 0; }
  .frag-row { display: flex; margin-top: 27px; }
  .frag-row label, .frag-method label { flex: none; width: 107px; text-align: right; padding-top: 10.500px; white-space: nowrap; }
  .frag-row em { font-weight: normal; }
  .under { width: 457px; height: 43px; margin-left: 20px; box-sizing: border-box; border: 1px solid #4c5a6b; }
  .frag-row .cal { margin-left: 0; }
  .frag-method { display: flex; margin-top: 20.500px; }
  .focus { position: absolute; left: 126px; top: 97px; width: 459px; height: 47px; box-sizing: border-box; border: 1px dotted #14566f; border-top: 0; }
  .menu { position: absolute; left: 127px; top: 36px; width: 457px; height: 106px; box-sizing: border-box; border: 2px solid #222; background: #fff; color: #222; font-weight: normal !important; font-size: 17.600px; line-height: 20.300px; padding-top: 10.500px !important; }
  .menu li { padding-left: 8px; height: 20.300px; }
  .menu .sel { height: 20px; background: #00a2e8; }

  .va-win { left: 679px; top: 1081px; width: 1027px; height: 1014px; padding: 0 44px 0 26px; overflow: hidden; border-bottom: 1px solid #1f5ea8; background: linear-gradient(90deg, #001b54 0, #00103f 26px, #00103f 983px, #002260 1027px); }
  .va-win::after { content: ''; position: absolute; left: 0; right: 0; bottom: 0; height: 1px; background: #8d9298; }
  .va-head { display: flex; justify-content: space-between; height: 119px; margin: 0 -44px 0 0; padding-right: 64px; background: radial-gradient(330px 190px at 490px 130px, #004276 0, #00326180 50%, transparent 100%); }
  .va-brand { display: flex; }
  .va-seal { width: 90px; height: 90px; margin: 11px 0 0 17.500px; }
  .ring-va { font: bold 7px 'Liberation Serif', serif; fill: #e9d27a; }
  .va-brand p { margin: 24px 0 0 19.500px; padding: 7.500px 0 0 16px; height: 56px; border-left: 1px solid #c7cfdf; color: #fff; font: 26.500px/25px 'Liberation Serif', Georgia, serif; }
  .va-tools { width: 310px; }
  .tab { display: flex; align-items: center; height: 31px; box-sizing: border-box; padding: 0 10px 0 9px; background: #fff; border-radius: 0 0 6px 6px; box-shadow: 1px 2px 0 #7a7a7a; color: #222; font-size: 13.700px; font-weight: bold; }
  .tab svg { width: 30px; height: 18px; margin: 4px 7px 0 0; }
  .tab .chev { width: 9px; height: 12px; margin: 2px 0 0 9px; }
  .searchline { display: flex; justify-content: flex-end; gap: 6px; margin-top: 13px; }
  .searchline i { width: 192px; height: 26px; box-sizing: border-box; border: 1px solid #777; background: #fff; }
  .searchline button { width: 60px; height: 26px; border-radius: 4px; background: linear-gradient(#e6e6e6, #c4c4c4); color: #555; font-size: 12px; font-weight: bold; }
  .social { display: flex; justify-content: flex-end; gap: 2px; margin-top: 11px; }
  .social svg { width: 20px; height: 20px; }
  .social span { margin: 8px 11px 0 0; line-height: 12px; color: #fff; font-size: 10px; }
  .blog { font: italic bold 17px 'Liberation Sans', sans-serif; fill: #fff; }

  .page { width: 957px; height: 894px; background: linear-gradient(#cfd0d2 52px, #fff 130px); }
  .va-nav { display: grid; grid-template-columns: 115px 115px 146px 116px 115px 115px 115px 120px; height: 52px; background: #eee; }
  .va-nav a { display: flex; align-items: center; justify-content: center; padding-bottom: 1px; border-right: 1px solid #aaa; border-left: 1px solid #fff; font-size: 12.900px; font-weight: bold; color: #003f72; }
  .va-nav a:last-child { border-right: 0; }
  .trail { margin: 13px 0 0 19.500px; height: 22px; line-height: 22px; font-size: 11px; font-weight: bold; color: #2e2e2e; }
  .page .va-title { margin: 6px 0 0 19.500px; height: 40px; font: 32px/40px 'Liberation Serif', Georgia, serif; color: #003f72; }
  .va-cols { display: grid; grid-template-columns: 220px 521px 215px; height: 749px; margin-top: 12px; }
  .left { height: 749px; background: linear-gradient(#dedede 62px, #ececec 450px, #fcfcfc 600px); }
  .dark { display: flex; align-items: center; gap: 8px; height: 31px; box-sizing: border-box; padding-left: 14px; padding-bottom: 2px; background: linear-gradient(#6b6d74, #4b4b50); color: #fff; font-size: 12.400px; }
  .dark i { border: 4px solid transparent; border-left: 5px solid #fff; border-right: 0; }
  .quick { width: 204px; height: 282px; box-sizing: border-box; margin: 8px 0 0 8px; border: 4px solid #dce8f2; background: linear-gradient(#fff, #ececec); }
  .quick h4, .box h4 { height: 20px; text-align: center; font: bold 15px/20px 'Liberation Serif', Georgia, serif; color: #003f72; margin-top: 13px; }
  .card { display: flex; align-items: center; gap: 8px; width: 161px; height: 37px; box-sizing: border-box; margin: 5.800px 0 0 20px; padding-left: 9px; border: 1px solid #c9c9c9; border-bottom: 2px solid #bbb; border-radius: 2px; background: linear-gradient(#fff, #e9e9e9); color: #777; font-size: 12.300px; font-weight: bold; }
  .card > svg { width: 20px; height: 17px; }
  .quick h4 + .card { display: block; height: 77px; margin: 22px 0 13px 15px; }
  .locator p { display: flex; align-items: center; gap: 12px; height: 20px; }
  .canvas .locator p { margin: 7px 0 0 4px; font-weight: bold; }
  .locator p svg { width: 12px; height: 20px; }
  .locator > div { display: flex; margin: 10px 0 0; gap: 3px; align-items: center; }
  .zip { width: 90px; height: 20px; box-sizing: border-box; padding-left: 4px; border: 1px solid #666; background: #fff; color: #111; font: 11.500px/18px 'Open Sans', sans-serif; }
  .locator button { width: 38px; height: 26px; border-radius: 4px; background: linear-gradient(#eee, #cfcfcf); color: #666; font-size: 12.500px; font-weight: bold; }
  .banner { width: 184px; height: 90px; margin: 0 0 23px 17px; }
  .quick + .banner { margin-top: 10px; }
  .vcl { font: 900 19px Lato, sans-serif; }
  .phone { font: bold 21px 'Open Sans', sans-serif; }
  .press { font: bold 18px 'Open Sans', sans-serif; }
  .one { font: bold 14px 'Liberation Sans', sans-serif; fill: #fff; }
  .online { font: italic bold 11px 'Liberation Serif', serif; fill: #e4173e; }
  .tag { font: bold 9px 'Open Sans', sans-serif; fill: #0a4484; }
  .eb { font: 800 28px 'Open Sans', sans-serif; fill: #283a85; }
  .eb-e { font: italic 800 33px 'Open Sans', sans-serif; fill: #283a85; }
  .eb-sub { font: 600 8.500px 'Open Sans', sans-serif; fill: #4c5b9c; }

  article { height: 749px; overflow: hidden; background: #fff; padding-left: 19.500px; color: #2e2e2e; }
  .art-title { font: bold 20.500px/18px 'Liberation Serif', Georgia, serif !important; color: #003f72; }
  .hero { display: flex; gap: 16px; height: 73px; margin: 19px 0 0 1px !important; }
  .hero svg { width: 73px; height: 73px; }
  .hero p { margin-top: 5.800px; font: bold 26px/25px 'Open Sans', sans-serif; color: #003e7e; }
  .jump { margin: 14px 0 0 83.500px !important; }
  .jump li { display: flex; align-items: center; gap: 3px; height: 19px; font-size: 12.300px; font-weight: bold; color: #003e7e; }
  .jump svg { width: 16px; height: 16px; }
  .rule { display: block; height: 4px; margin: 14px 3px 0 -15px; background: #00b3e3; }
  .lead { padding-top: 8.500px !important; font: bold 21px/25px 'Liberation Serif', Georgia, serif !important; color: #6c6c6c; }
  .know { margin-top: 50.500px !important; height: 24px; font: bold 21.500px/24px 'Liberation Serif', Georgia, serif !important; color: #003f72; }
  .copy { margin-top: 16.600px !important; font-size: 12.800px; line-height: 19.750px; }
  .know + .copy { margin-top: 11.300px !important; }
  .right { height: 749px; overflow: hidden; background: linear-gradient(#cbccce, #e6e7e7 70px, #e8e8e8 250px, #fdfdfd 500px); font-size: 12.400px; color: #222; }
  .box { width: 199px; box-sizing: border-box; margin-left: 8px; border: 4px solid #dce8f2; background: linear-gradient(#fff, #ececec); }
  .box a, .link { color: #0076bd !important; }
  .res { height: 179px; margin-top: 13px; }
  .handout { display: flex; align-items: center; justify-content: space-between; margin-top: 18.700px; padding: 0 11px 0 8.500px; line-height: 16px; }
  .book { display: block; margin: 8.300px 0 0 8.500px !important; line-height: 17.500px; }
  .pdf { width: 16px; height: 17px; }
  .addl { height: 600px; margin-top: 8px; background: linear-gradient(#fff, #f0f0f0); }
  .box h5 { margin: 27.400px 5px 0; padding-bottom: 3.500px; border-bottom: 1px solid #999; text-align: center; font: 16.500px/15px 'Liberation Serif', Georgia, serif; color: #777; }
  .box .h-b { margin-top: 32.800px; }
  .chart, .link { padding-left: 8.500px !important; line-height: 17px; margin-top: 8.400px !important; }
  .chart { height: 68px; font-size: 12.200px; }
  .canvas .chart svg { display: inline-block; vertical-align: top; }
  .ext { width: 11px; height: 11px; }
  .canvas .link svg { display: inline-block; vertical-align: 0; margin-left: 5px; }
  .sep { margin: 0 4px 0 7px; }
</style>
